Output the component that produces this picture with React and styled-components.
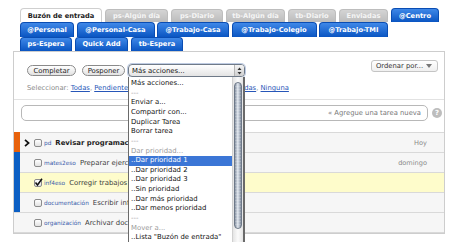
import React from "react";
import styled, { createGlobalStyle } from "styled-components";

const GlobalStyle = createGlobalStyle`
  body {
    margin: 0;
    background: #fff;
    font-family: "DejaVu Sans", "Liberation Sans", sans-serif;
  }
`;

const Page = styled.div`
  width: 450px;
  height: 242px;
  overflow: hidden;
  box-sizing: border-box;
  padding: 8px 5px 0 13px;
`;

const TabStack = styled.div`
  display: flex;
  flex-direction: column;
  padding-left: 7px;
`;

const TabRow = styled.div`
  display: flex;
  align-items: flex-end;
  gap: ${(p) => p.$gap}px;
  height: ${(p) => p.$h}px;
`;

const tabSkins = {
  active: `
    background: #fff;
    border: 1px solid #cfcfcf;
    border-bottom: none;
    color: #222;
  `,
  gray: `
    height: 13px;
    background: linear-gradient(#d4d4d4, #bcbcbc);
    border: 1px solid #bdbdbd;
    border-bottom: none;
    color: #f5f5f5;
  `,
  blue: `
    background: linear-gradient(#3f88e8, #0a55c2);
    border: 1px solid #0a4db3;
    border-bottom: none;
    color: #fff;
  `,
};

const Tab = styled.div`
  width: ${(p) => p.$w}px;
  height: 100%;
  box-sizing: border-box;
  border-radius: 4px 4px 0 0;
  display: flex;
  align-items: center;
  justify-content: center;
  font-size: 6.7px;
  font-weight: bold;
  white-space: nowrap;
  ${(p) => tabSkins[p.$kind]}
`;

const Panel = styled.div`
  width: 432px;
  box-sizing: border-box;
  border: 1px solid #cdcdcd;
  background: #fff;
`;

const TopBar = styled.div`
  height: 48px;
  box-sizing: border-box;
  padding: 8px 6px 0 13px;
  border-bottom: 1px solid #e2e2e2;
`;

const ActionsRow = styled.div`
  display: flex;
  justify-content: space-between;
  align-items: flex-start;
`;

const LeftGroup = styled.div`
  display: flex;
  align-items: center;
  margin-top: 4px;
  height: 13px;
`;

const PillButton = styled.div`
  width: ${(p) => p.$w}px;
  height: 11px;
  box-sizing: border-box;
  margin-right: ${(p) => p.$mr}px;
  border: 1px solid #8a8a8a;
  border-radius: 6px;
  background: linear-gradient(#ffffff, #e2e2e2);
  font-size: 6.9px;
  color: #222;
  display: flex;
  align-items: center;
  justify-content: center;
`;

const SelectWrap = styled.div`
  position: relative;
  width: 117px;
  height: 13px;
`;

const SelectBox = styled.div`
  height: 100%;
  box-sizing: border-box;
  border: 1px solid #6f7a88;
  border-radius: 4px;
  background: linear-gradient(#ffffff, #e4e4e4);
  box-shadow: 0 0 0 1px rgba(110, 140, 190, 0.45);
  display: flex;
  align-items: center;
  justify-content: space-between;
  padding-left: 3px;
  font-size: 6.9px;
  color: #111;
`;

const Stepper = styled.div`
  width: 9px;
  height: 100%;
  border-left: 1px solid #b5b5b5;
  background: linear-gradient(#f4f4f4, #cfcfcf);
  border-radius: 0 3px 3px 0;
  display: flex;
  align-items: center;
  justify-content: center;
`;

const Dropdown = styled.div`
  position: absolute;
  top: 13px;
  left: 0;
  width: 117px;
  height: 180px;
  box-sizing: border-box;
  padding-top: 2px;
  background: #fff;
  border-left: 1px solid #6a6a6a;
  border-right: 2px solid #6a6a6a;
  z-index: 5;
`;

const Item = styled.div`
  height: 9.625px;
  line-height: 9.625px;
  margin-right: 10px;
  padding-left: 2px;
  font-size: 6.9px;
  white-space: nowrap;
  color: ${(p) => (p.$selected ? "#fff" : p.$muted ? "#9a9a9a" : "#111")};
  background: ${(p) => (p.$selected ? "#3b76d6" : "transparent")};
`;

const ScrollTrack = styled.div`
  position: absolute;
  top: 0;
  right: 0;
  bottom: 0;
  width: 10px;
  background: linear-gradient(90deg, #e4e4e4, #fbfbfb 50%, #e4e4e4);
  border-left: 1px solid #d0d0d0;
`;

const ScrollThumb = styled.div`
  position: absolute;
  top: 5px;
  left: 1px;
  right: 1px;
  height: 145px;
  border-radius: 4px;
  border: 1px solid #6d7888;
  background: repeating-linear-gradient(
      180deg,
      rgba(255, 255, 255, 0.18) 0 1px,
      rgba(0, 0, 0, 0) 1px 3px
    ),
    linear-gradient(90deg, #8893a3, #dfe5ed 45%, #c2cad6 65%, #7e8999);
`;

const SortButton = styled.div`
  width: 67px;
  height: 12px;
  box-sizing: border-box;
  border: 1px solid #c4c4c4;
  border-radius: 3px;
  background: linear-gradient(#fff, #f0f0f0);
  display: flex;
  align-items: center;
  justify-content: space-between;
  padding: 0 5px 0 4px;
  font-size: 6.8px;
  color: #333;
`;

const SelectLine = styled.div`
  margin-top: 6px;
  font-size: 6.8px;
  line-height: 10px;
  color: #8a8a8a;
  white-space: nowrap;
`;

const Link = styled.a`
  color: #2756b8;
  text-decoration: underline;
`;

const InputArea = styled.div`
  height: 32px;
  box-sizing: border-box;
  padding: 5px 0 0 7px;
  display: flex;
  align-items: flex-start;
`;

const TaskInput = styled.div`
  width: 407px;
  height: 16px;
  box-sizing: border-box;
  border: 1px solid #b8b8b8;
  border-radius: 5px;
  display: flex;
  align-items: center;
  justify-content: flex-end;
  padding-right: 6px;
  font-size: 6.8px;
  color: #777;
`;

const Help = styled.div`
  width: 10px;
  height: 10px;
  margin: 3px 0 0 4px;
  border-radius: 50%;
  background: #bdbdbd;
  color: #fff;
  font-size: 7px;
  font-weight: bold;
  display: flex;
  align-items: center;
  justify-content: center;
`;

const TaskRow = styled.div`
  height: 20px;
  box-sizing: border-box;
  border-top: 1px solid #d9d9d9;
  background: ${(p) => p.$bg};
  display: flex;
  align-items: center;
  white-space: nowrap;
  &:last-child {
    height: 21px;
    border-bottom: 1px solid #d9d9d9;
  }
`;

const PriorityBar = styled.div`
  width: 6px;
  align-self: stretch;
  margin-top: -1px;
  background: ${(p) => p.$color};
`;

const ArrowCell = styled.div`
  width: 13px;
  display: flex;
  align-items: center;
  justify-content: center;
  padding-right: 1px;
`;

const Check = styled.div`
  width: 8px;
  height: 8px;
  box-sizing: border-box;
  border: 1px solid #8c8c8c;
  border-radius: 2px;
  background: linear-gradient(#fff, #e2e2e2);
  position: relative;
`;

const Tag = styled.span`
  margin-left: 2px;
  font-size: 5.8px;
  color: #3a5cab;
`;

const Title = styled.span`
  margin-left: 4px;
  font-size: 6.9px;
  color: ${(p) => (p.$bold ? "#1c1c1c" : "#3c3c3c")};
  font-weight: ${(p) => (p.$bold ? "bold" : "normal")};
`;

const Due = styled.span`
  margin-left: auto;
  padding-right: 17px;
  font-size: 6.6px;
  color: #8a8a8a;
`;

const row1 = [
  { label: "Buzón de entrada", w: 82, kind: "active" },
  { label: "ps-Algún día", w: 63, kind: "gray" },
  { label: "ps-Diario", w: 52, kind: "gray" },
  { label: "tb-Algún día", w: 59, kind: "gray" },
  { label: "tb-Diario", w: 48, kind: "gray" },
  { label: "Enviadas", w: 49, kind: "gray" },
  { label: "@Centro", w: 48, kind: "blue" },
];

const row2 = [
  { label: "@Personal", w: 54, kind: "blue" },
  { label: "@Personal-Casa", w: 78, kind: "blue" },
  { label: "@Trabajo-Casa", w: 72, kind: "blue" },
  { label: "@Trabajo-Colegio", w: 85, kind: "blue" },
  { label: "@Trabajo-TMI", w: 69, kind: "blue" },
];

const row3 = [
  { label: "ps-Espera", w: 52, kind: "blue" },
  { label: "Quick Add", w: 53, kind: "blue" },
  { label: "tb-Espera", w: 52, kind: "blue" },
];

const menuItems = [
  { t: "Más acciones..." },
  { t: "---", muted: true },
  { t: "Enviar a..." },
  { t: "Compartir con..." },
  { t: "Duplicar Tarea" },
  { t: "Borrar tarea" },
  { t: "---", muted: true },
  { t: "Dar prioridad...", muted: true },
  { t: "..Dar prioridad 1", selected: true },
  { t: "..Dar prioridad 2" },
  { t: "..Dar prioridad 3" },
  { t: "..Sin prioridad" },
  { t: "..Dar más prioridad" },
  { t: "..Dar menos prioridad" },
  { t: "---", muted: true },
  { t: "Mover a...", muted: true },
  { t: '..Lista "Buzón de entrada"' },
  { t: '..Lista "ps-Algún día"' },
];

const tasks = [
  { bar: "#e8620c", arrow: true, tag: "pd", title: "Revisar programación", bold: true, due: "Hoy", bg: "#f6f6f6" },
  { bar: "#0b5fc4", tag: "mates2eso", title: "Preparar ejercicios", due: "domingo", bg: "#f6f6f6" },
  { bar: "#0b5fc4", tag: "inf4eso", title: "Corregir trabajos", checked: true, bg: "#fefccb" },
  { bar: "#0b5fc4", tag: "documentación", title: "Escribir informe", bg: "#f6f6f6" },
  { bar: "transparent", tag: "organización", title: "Archivar documentos", bg: "#f6f6f6" },
];

const Tabs = ({ items, gap, h }) => (
  <TabRow $gap={gap} $h={h}>
    {items.map((t) => (
      <Tab key={t.label} $w={t.w} $kind={t.kind}>
        {t.label}
      </Tab>
    ))}
  </TabRow>
);

const App = () => {
  return (
    <Page>
      <GlobalStyle />
      <TabStack>
        <Tabs items={row1} gap={3} h={14.4} />
        <Tabs items={row2} gap={2.5} h={14.4} />
        <Tabs items={row3} gap={3} h={14.4} />
      </TabStack>

      <Panel>
        <TopBar>
          <ActionsRow>
            <LeftGroup>
              <PillButton $w={49} $mr={6}>Completar</PillButton>
              <PillButton $w={43} $mr={3}>Posponer</PillButton>
              <SelectWrap>
                <SelectBox>
                  Más acciones...
                  <Stepper>
                    <svg width="5" height="8" viewBox="0 0 5 8">
                      <path d="M2.5 0.5 L4.5 3 L0.5 3 Z M2.5 7.5 L4.5 5 L0.5 5 Z" fill="#333" />
                    </svg>
                  </Stepper>
                </SelectBox>
                <Dropdown>
                  {menuItems.map((m, i) => (
                    <Item key={i} $muted={m.muted} $selected={m.selected}>
                      {m.t}
                    </Item>
                  ))}
                  <ScrollTrack>
                    <ScrollThumb />
                  </ScrollTrack>
                </Dropdown>
              </SelectWrap>
            </LeftGroup>
            <SortButton>
              Ordenar por...
              <svg width="6" height="4" viewBox="0 0 6 4">
                <path d="M0 0 L6 0 L3 4 Z" fill="#777" />
              </svg>
            </SortButton>
          </ActionsRow>
          <SelectLine>
            Seleccionar: <Link>Todas</Link>, <Link>Pendientes hoy</Link>,{" "}
            <Link>Pendientes mañana</Link>, <Link>Atrasadas</Link>,{" "}
            <Link>Ninguna</Link>
          </SelectLine>
        </TopBar>

        <InputArea>
          <TaskInput>« Agregue una tarea nueva</TaskInput>
          <Help>?</Help>
        </InputArea>

        {tasks.map((t) => (
          <TaskRow key={t.tag} $bg={t.bg}>
            <PriorityBar $color={t.bar} />
            <ArrowCell>
              {t.arrow && (
                <svg width="6" height="8" viewBox="0 0 6 8">
                  <path d="M1 0.8 L4.6 4 L1 7.2" stroke="#111" strokeWidth="1.7" fill="none" />
                </svg>
              )}
            </ArrowCell>
            <Check>
              {t.checked && (
                <svg width="9" height="9" viewBox="0 0 9 9" style={{ position: "absolute", left: -1, top: -2 }}>
                  <path d="M1.5 4.5 L3.5 7 L8 0.8" stroke="#111" strokeWidth="1.5" fill="none" />
                </svg>
              )}
            </Check>
            <Tag>{t.tag}</Tag>
            <Title $bold={t.bold}>{t.title}</Title>
            {t.due && <Due>{t.due}</Due>}
          </TaskRow>
        ))}
      </Panel>
    </Page>
  );
};

export default App;
